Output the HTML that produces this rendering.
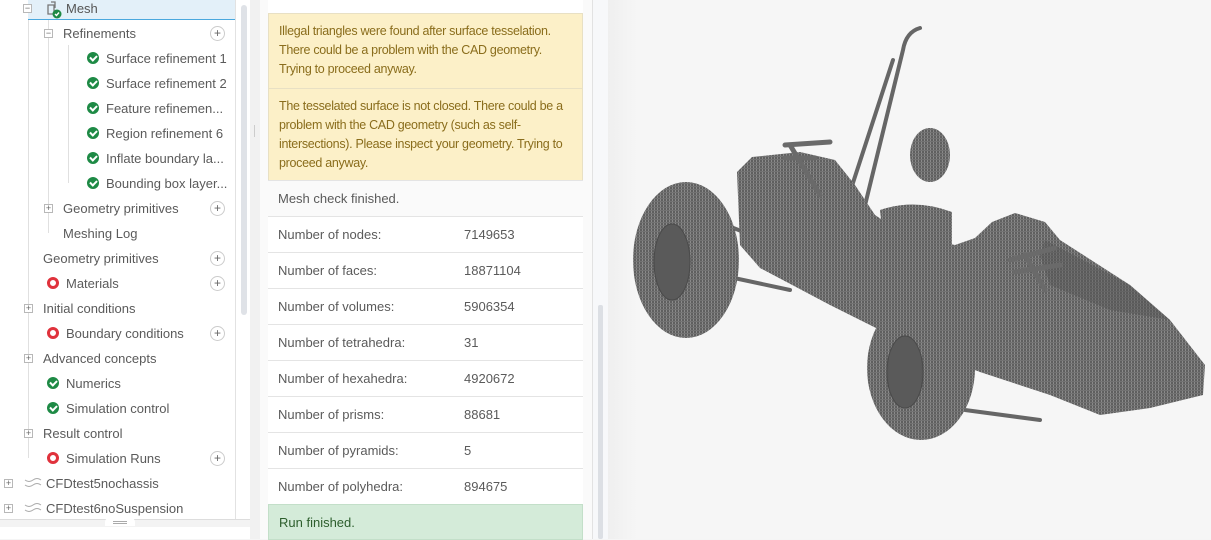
<!DOCTYPE html>
<html><head><meta charset="utf-8"><style>
*{margin:0;padding:0;box-sizing:border-box}
body{width:1211px;height:539px;overflow:hidden;position:relative;background:#f5f5f5;font-family:"Liberation Sans",sans-serif;font-size:13px;color:#5a5a5a}
.abs{position:absolute}
.t{position:absolute;white-space:nowrap;line-height:16px;height:16px;top:1px}
.ok{position:absolute;width:12px;height:12px;border-radius:50%;background:#1e8a45}
.ok:after{content:"";position:absolute;left:3px;top:2.5px;width:5px;height:3px;border-left:2px solid #fff;border-bottom:2px solid #fff;transform:rotate(-45deg)}
.err{position:absolute;width:12px;height:12px;border-radius:50%;border:3px solid #e0323c}
.box{position:absolute;width:9px;height:9px;border:1px solid #b8b8b8;background:#fff;font-size:9px;line-height:7px;text-align:center;color:#666}
.plus{position:absolute;width:15px;height:15px;border:1px solid #ccc;border-radius:50%;font-size:12px;line-height:13px;text-align:center;color:#666;background:#fff}
.row{position:absolute;left:268px;width:315px;height:36px;border-top:1px solid #e4e4e4;background:#fff}
.row span{position:absolute;top:10px;line-height:16px}
.row .v{left:196px}
.row .l{left:10px}
.warn{position:absolute;left:268px;width:315px;background:#fcf0c8;color:#8a6d1c;padding:8px 8px 8px 10px;line-height:19px;font-size:12.5px;letter-spacing:-0.3px;border:1px solid #e8e0c4}
</style></head><body>
<div class="abs" style="left:0;top:0;width:250px;height:539px;background:#fff"></div>
<div class="abs" style="left:235px;top:0;width:1px;height:520px;background:#e2e2e2"></div>
<div class="abs" style="left:241px;top:5px;width:6px;height:310px;background:#dfe2e7;border-radius:3px"></div>
<div class="abs" style="left:250px;top:0;width:10px;height:539px;background:#f1f1f1"></div>
<div class="abs" style="left:0;top:519px;width:250px;height:1px;background:#ddd"></div>
<div class="abs" style="left:0;top:520px;width:250px;height:19px;background:#f3f3f3"></div>
<div class="abs" style="left:105px;top:518px;width:30px;height:8px;background:#fff;border-radius:4px 4px 0 0"></div>
<div class="abs" style="left:113px;top:521px;width:14px;height:1px;background:#aaa"></div>
<div class="abs" style="left:113px;top:523px;width:14px;height:1px;background:#aaa"></div>
<div class="abs" style="left:0;top:527px;width:250px;height:12px;background:#fff"></div>
<div class="abs" style="left:48px;top:20px;width:1px;height:213px;background:#e0e0e0"></div>
<div class="abs" style="left:68px;top:45px;width:1px;height:138px;background:#e0e0e0"></div>
<div class="abs" style="left:28px;top:20px;width:1px;height:438px;background:#e0e0e0"></div>
<div class="abs" style="left:28px;top:0;width:207px;height:20px;background:#e3f0f9;border-bottom:1px solid #4aa8de"></div>
<div class="box" style="left:23px;top:4px">−</div>
<svg class="abs" style="left:45px;top:1px" width="20" height="18"><path d="M3 4h6v9H3zM6 1h4v6" fill="none" stroke="#777" stroke-width="1.3"/><circle cx="12" cy="13" r="4.5" fill="#1e8a45"/><path d="M10 13l1.5 1.5 2.5-3" stroke="#fff" stroke-width="1.4" fill="none"/></svg>
<div class="t" style="left:66px;top:1px;color:#555">Mesh</div>
<div class="box" style="left:44px;top:29px">−</div><div class="t" style="left:63px;top:26px">Refinements</div><div class="plus" style="left:210px;top:26px">+</div>
<div class="ok" style="left:87px;top:52px"></div><div class="t" style="left:106px;top:51px">Surface refinement 1</div>
<div class="ok" style="left:87px;top:77px"></div><div class="t" style="left:106px;top:76px">Surface refinement 2</div>
<div class="ok" style="left:87px;top:102px"></div><div class="t" style="left:106px;top:101px">Feature refinemen...</div>
<div class="ok" style="left:87px;top:127px"></div><div class="t" style="left:106px;top:126px">Region refinement 6</div>
<div class="ok" style="left:87px;top:152px"></div><div class="t" style="left:106px;top:151px">Inflate boundary la...</div>
<div class="ok" style="left:87px;top:177px"></div><div class="t" style="left:106px;top:176px">Bounding box layer...</div>
<div class="box" style="left:44px;top:204px">+</div><div class="t" style="left:63px;top:201px">Geometry primitives</div><div class="plus" style="left:210px;top:201px">+</div>
<div class="t" style="left:63px;top:226px">Meshing Log</div>
<div class="t" style="left:43px;top:251px">Geometry primitives</div><div class="plus" style="left:210px;top:251px">+</div>
<div class="err" style="left:47px;top:277px"></div><div class="t" style="left:66px;top:276px">Materials</div><div class="plus" style="left:210px;top:276px">+</div>
<div class="box" style="left:24px;top:304px">+</div><div class="t" style="left:43px;top:301px">Initial conditions</div>
<div class="err" style="left:47px;top:327px"></div><div class="t" style="left:66px;top:326px">Boundary conditions</div><div class="plus" style="left:210px;top:326px">+</div>
<div class="box" style="left:24px;top:354px">+</div><div class="t" style="left:43px;top:351px">Advanced concepts</div>
<div class="ok" style="left:47px;top:377px"></div><div class="t" style="left:66px;top:376px">Numerics</div>
<div class="ok" style="left:47px;top:402px"></div><div class="t" style="left:66px;top:401px">Simulation control</div>
<div class="box" style="left:24px;top:429px">+</div><div class="t" style="left:43px;top:426px">Result control</div>
<div class="err" style="left:47px;top:452px"></div><div class="t" style="left:66px;top:451px">Simulation Runs</div><div class="plus" style="left:210px;top:451px">+</div>
<div class="box" style="left:4px;top:479px">+</div><svg class="abs" style="left:24px;top:477px" width="18" height="12"><path d="M1 3q4 3 8 0t8 0M1 8q4 3 8 0t8 0" fill="none" stroke="#aaa"/></svg><div class="t" style="left:46px;top:476px">CFDtest5nochassis</div>
<div class="box" style="left:4px;top:504px">+</div><svg class="abs" style="left:24px;top:502px" width="18" height="12"><path d="M1 3q4 3 8 0t8 0M1 8q4 3 8 0t8 0" fill="none" stroke="#aaa"/></svg><div class="t" style="left:46px;top:501px">CFDtest6noSuspension</div>
<div class="abs" style="left:254px;top:125px;width:1px;height:12px;background:#ccc"></div>
<div class="abs" style="left:260px;top:0;width:333px;height:539px;background:#fafafa;border-right:1px solid #e2e2e2"></div>
<div class="abs" style="left:268px;top:0;width:315px;height:539px;background:#fff"></div>
<div class="abs" style="left:593px;top:0;width:15px;height:539px;background:#f7f8fa"></div>
<div class="abs" style="left:598px;top:305px;width:5px;height:234px;background:#dcdfe4;border-radius:2px"></div>
<div class="warn" style="top:13px;height:76px">Illegal triangles were found after surface tesselation. There could be a problem with the CAD geometry. Trying to proceed anyway.</div>
<div class="warn" style="top:88px;height:93px">The tesselated surface is not closed. There could be a problem with the CAD geometry (such as self-intersections). Please inspect your geometry. Trying to proceed anyway.</div>
<div class="row" style="top:180px;background:#fafafa"><span class="l">Mesh check finished.</span></div>
<div class="row" style="top:216px"><span class="l">Number of nodes:</span><span class="v">7149653</span></div>
<div class="row" style="top:252px"><span class="l">Number of faces:</span><span class="v">18871104</span></div>
<div class="row" style="top:288px"><span class="l">Number of volumes:</span><span class="v">5906354</span></div>
<div class="row" style="top:324px"><span class="l">Number of tetrahedra:</span><span class="v">31</span></div>
<div class="row" style="top:360px"><span class="l">Number of hexahedra:</span><span class="v">4920672</span></div>
<div class="row" style="top:396px"><span class="l">Number of prisms:</span><span class="v">88681</span></div>
<div class="row" style="top:432px"><span class="l">Number of pyramids:</span><span class="v">5</span></div>
<div class="row" style="top:468px"><span class="l">Number of polyhedra:</span><span class="v">894675</span></div>
<div class="row" style="top:504px;background:#d4ebd9;border:1px solid #c3dfc9;color:#2d5e2d"><span class="l">Run finished.</span></div>
<div class="abs" style="left:608px;top:0;width:603px;height:539px;background:linear-gradient(90deg,#efefef,#f6f6f6 30px)"></div>
<svg class="abs" style="left:0;top:0" width="1211" height="539">
<defs><pattern id="m" width="3" height="3" patternUnits="userSpaceOnUse"><rect width="3" height="3" fill="#5f5f5f"/><rect width="1" height="3" fill="#8a8a8a"/><rect width="3" height="1" fill="#727272"/></pattern></defs>
<g stroke="#666" stroke-width="4" fill="none" stroke-linecap="round">
<path d="M857 238 L903 50 Q906 32 920 28"/><path d="M850 192 L893 60"/>
<path d="M700 215 L790 250"/><path d="M720 275 L790 290"/><path d="M950 330 L1030 300"/><path d="M950 365 L1030 375"/><path d="M965 410 L1040 420"/>
</g>
<path d="M737 172 L752 157 L800 152 L835 160 L855 185 L875 215 L905 235 L955 245 L975 238 L992 222 L1015 213 L1045 222 L1060 240 L1130 285 L1170 320 L1205 365 L1203 395 L1150 408 L1100 415 L1050 395 L980 372 L900 340 L830 305 L760 268 L740 245 Z" fill="url(#m)"/>
<path d="M1045 240 L1130 285 L1170 320 L1110 310 L1050 285 L1040 255 Z" fill="#555" opacity=".45"/>
<path d="M880 210 Q915 198 952 212 L952 255 L884 248 Z" fill="url(#m)"/>
<ellipse cx="930" cy="155" rx="20" ry="27" fill="url(#m)"/>
<g stroke="#6a6a6a" stroke-width="5" fill="none" stroke-linecap="round"><path d="M785 145 L830 142"/><path d="M785 158 L815 158"/><path d="M1010 260 L1055 248"/><path d="M1015 272 L1060 265"/><path d="M790 145 L820 195"/><path d="M1025 255 L1045 290"/></g>
<ellipse cx="686" cy="260" rx="53" ry="78" fill="url(#m)"/>
<ellipse cx="672" cy="262" rx="18" ry="38" fill="#5a5a5a" stroke="#4a4a4a"/>
<ellipse cx="921" cy="368" rx="54" ry="72" fill="url(#m)"/>
<ellipse cx="905" cy="372" rx="18" ry="36" fill="#5a5a5a" stroke="#4a4a4a"/>
</svg>
</body></html>
